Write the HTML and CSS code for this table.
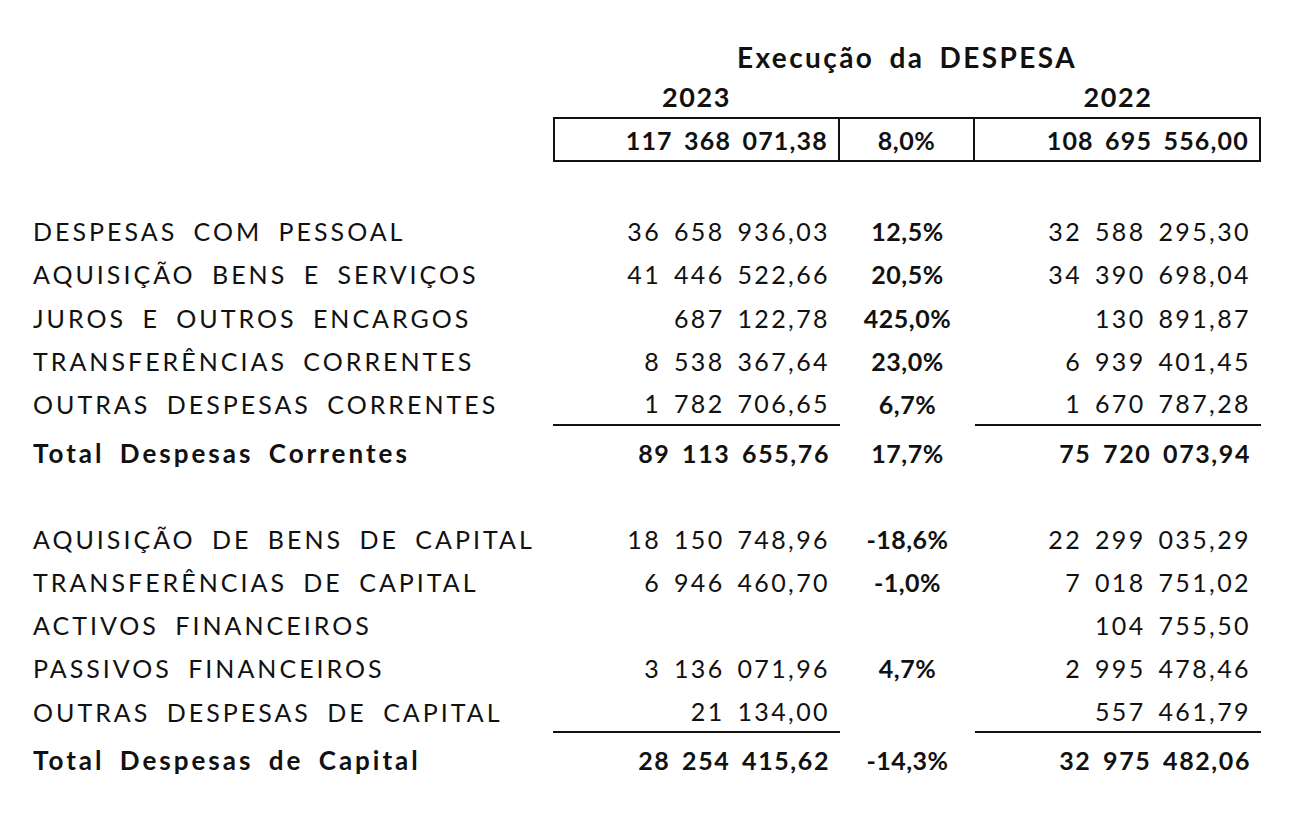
FILE: index.html
```html
<!DOCTYPE html>
<html lang="pt">
<head>
<meta charset="utf-8">
<title>Execução da DESPESA</title>
<link rel="stylesheet" href="styles.css">
</head>
<body>
<div class="sheet">
  <div class="row head-title">
    <div class="label"></div>
    <div class="title">Execução da DESPESA</div>
  </div>
  <div class="row head-years">
    <div class="label"></div>
    <div class="year">2023</div>
    <div class="pct"></div>
    <div class="year">2022</div>
  </div>
  <div class="row head-box">
    <div class="label"></div>
    <div class="num box-cell first">117 368 071,38</div>
    <div class="pct box-cell">8,0%</div>
    <div class="num box-cell last">108 695 556,00</div>
  </div>

  <div class="section">
    <div class="row"><div class="label">DESPESAS COM PESSOAL</div><div class="num">36 658 936,03</div><div class="pct">12,5%</div><div class="num">32 588 295,30</div></div>
    <div class="row"><div class="label">AQUISIÇÃO BENS E SERVIÇOS</div><div class="num">41 446 522,66</div><div class="pct">20,5%</div><div class="num">34 390 698,04</div></div>
    <div class="row"><div class="label">JUROS E OUTROS ENCARGOS</div><div class="num">687 122,78</div><div class="pct">425,0%</div><div class="num">130 891,87</div></div>
    <div class="row"><div class="label">TRANSFERÊNCIAS CORRENTES</div><div class="num">8 538 367,64</div><div class="pct">23,0%</div><div class="num">6 939 401,45</div></div>
    <div class="row underlined"><div class="label">OUTRAS DESPESAS CORRENTES</div><div class="num">1 782 706,65</div><div class="pct">6,7%</div><div class="num">1 670 787,28</div></div>
    <div class="row total"><div class="label">Total Despesas Correntes</div><div class="num">89 113 655,76</div><div class="pct">17,7%</div><div class="num">75 720 073,94</div></div>
  </div>

  <div class="section">
    <div class="row"><div class="label">AQUISIÇÃO DE BENS DE CAPITAL</div><div class="num">18 150 748,96</div><div class="pct">-18,6%</div><div class="num">22 299 035,29</div></div>
    <div class="row"><div class="label">TRANSFERÊNCIAS DE CAPITAL</div><div class="num">6 946 460,70</div><div class="pct">-1,0%</div><div class="num">7 018 751,02</div></div>
    <div class="row"><div class="label">ACTIVOS FINANCEIROS</div><div class="num"></div><div class="pct"></div><div class="num">104 755,50</div></div>
    <div class="row"><div class="label">PASSIVOS FINANCEIROS</div><div class="num">3 136 071,96</div><div class="pct">4,7%</div><div class="num">2 995 478,46</div></div>
    <div class="row underlined"><div class="label">OUTRAS DESPESAS DE CAPITAL</div><div class="num">21 134,00</div><div class="pct"></div><div class="num">557 461,79</div></div>
    <div class="row total"><div class="label">Total Despesas de Capital</div><div class="num">28 254 415,62</div><div class="pct">-14,3%</div><div class="num">32 975 482,06</div></div>
  </div>
</div>
</body>
</html>
```

FILE: styles.css
```css
html, body {
  margin: 0;
  padding: 0;
  background: #ffffff;
}

body {
  font-family: "Lato", "Open Sans", sans-serif;
  color: #111111;
}

.sheet {
  padding: 37px 0 0 33px;
  width: 1228px;
}

.row {
  display: grid;
  grid-template-columns: 520px 287px 135px 286px;
  height: 43.25px;
  align-items: center;
  font-size: 25px;
  line-height: 30px;
}

.label {
  letter-spacing: 3px;
  word-spacing: 7px;
  white-space: nowrap;
}

.num {
  text-align: right;
  padding-right: 10px;
  letter-spacing: 2.4px;
  word-spacing: 4px;
  white-space: nowrap;
}

.pct {
  text-align: center;
  font-weight: 700;
  letter-spacing: 0.5px;
}

/* header */
.head-title {
  height: 40px;
}

.title {
  grid-column: 2 / 5;
  text-align: center;
  font-weight: 700;
  font-size: 28px;
  letter-spacing: 2.4px;
  word-spacing: 6px;
}

.head-years {
  height: 40px;
}

.year {
  text-align: center;
  font-weight: 700;
  font-size: 27px;
  letter-spacing: 1.6px;
}

.head-box {
  height: 45px;
  align-items: stretch;
}

.box-cell {
  display: flex;
  align-items: center;
  border-top: 2px solid #111;
  border-bottom: 2px solid #111;
  border-right: 2px solid #111;
  font-weight: 700;
}

.box-cell.num {
  letter-spacing: 1.2px;
  word-spacing: 4px;
}

.box-cell.first {
  border-left: 2px solid #111;
  justify-content: flex-end;
}

.box-cell.last {
  justify-content: flex-end;
}

.box-cell.pct {
  justify-content: center;
}

/* sections */
.section {
  margin-top: 47.4px;
}

.section + .section {
  margin-top: 42.4px;
}

.underlined {
  align-items: stretch;
}

.underlined > div {
  display: flex;
  align-items: center;
}

.underlined > .num {
  justify-content: flex-end;
  border-bottom: 2px solid #111;
}

.underlined > .pct {
  justify-content: center;
}

.total {
  height: 49px;
  padding-top: 5px;
  box-sizing: border-box;
  font-weight: 700;
}

.total .label {
  font-size: 26px;
  letter-spacing: 3px;
  word-spacing: 6px;
}

.total .num {
  letter-spacing: 1.6px;
  word-spacing: 4px;
}
```
